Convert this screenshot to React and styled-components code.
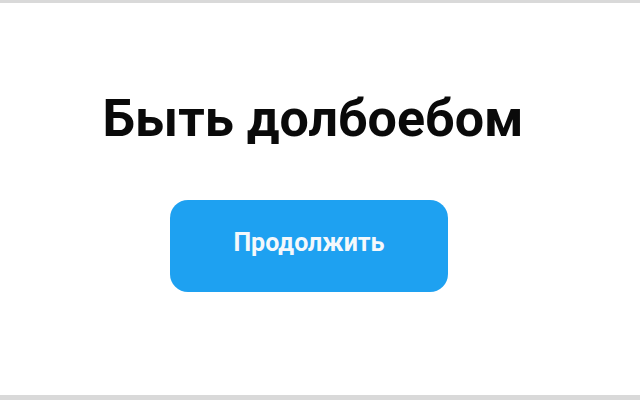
import { createGlobalStyle, styled } from "styled-components";

const GlobalStyle = createGlobalStyle`
    html, body {
        margin: 0;
        padding: 0;
        background: #ffffff;
    }
    #root {
        width: 640px;
        height: 400px;
    }
`;

export default function App() {
    return (
        <>
            <GlobalStyle />
            <Screen>
                <Content>
                    <Title>Быть долбоебом</Title>
                    <ContinueButton>Продолжить</ContinueButton>
                </Content>
            </Screen>
        </>
    );
}

const Screen = styled.div`
    width: 640px;
    height: 400px;
    box-sizing: border-box;
    border-top: 3px solid #d9d9d9;
    border-bottom: 5px solid #d9d9d9;
    background: #ffffff;
    display: flex;
    justify-content: center;
    padding-right: 14px;
`;

const Content = styled.div`
    display: flex;
    flex-direction: column;
    align-items: center;
    padding-top: 86px;
`;

const Title = styled.h1`
    margin: 0;
    font-family: Roboto, "Noto Sans", sans-serif;
    font-weight: 700;
    font-size: 52px;
    line-height: 60px;
    color: #0a0a0a;
`;

const ContinueButton = styled.button`
    margin-top: 51px;
    margin-right: 8px;
    padding: 0 0 7px;
    width: 278px;
    height: 92px;
    border: none;
    border-radius: 18px;
    background: #1ea1f1;
    color: #f4f8fb;
    font-family: Roboto, "Noto Sans", sans-serif;
    font-weight: 700;
    font-size: 25px;
    cursor: pointer;
`;
